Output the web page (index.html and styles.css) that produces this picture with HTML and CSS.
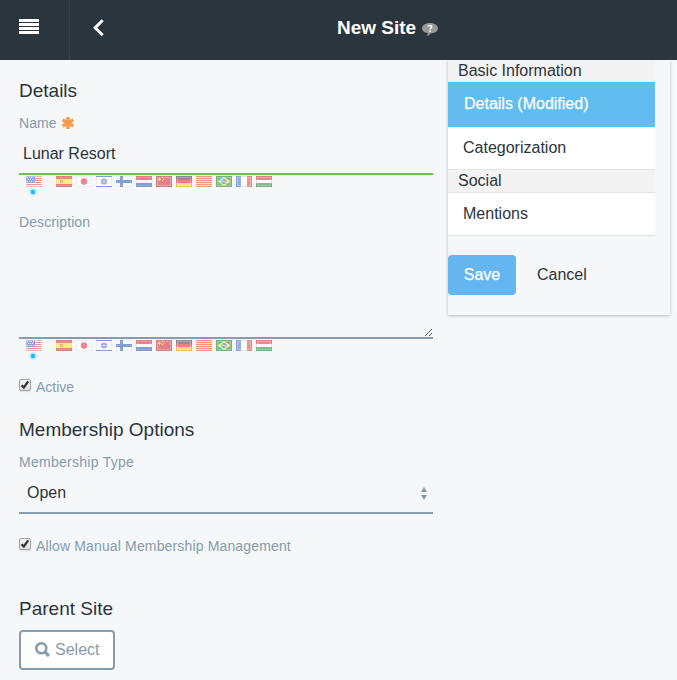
FILE: index.html
```html
<!DOCTYPE html>
<html lang="en">
<head>
<meta charset="utf-8">
<title>New Site</title>
<link rel="stylesheet" href="styles.css">
</head>
<body>
<svg class="defs" width="0" height="0">
  <defs>
    <g id="shade"><rect x=".5" y=".5" width="15" height="10" fill="none" stroke="#000" stroke-opacity=".16"/><rect x="1.5" y="1.5" width="13" height="8" fill="none" stroke="#fff" stroke-opacity=".25"/></g>
    <g id="strip">
      <g><path fill="#fff" d="M0 0h16v11H0z"/><path stroke="#e8331c" d="M0 .5h16M0 2.5h16M0 4.5h16M0 6.5h16M0 8.5h16M0 10.5h16"/><path fill="#2450c8" d="M0 0h9v7H0z"/><path stroke="#fff" stroke-dasharray="1 1" d="M1 1.5h7M2 3.5h6M1 5.5h7"/><path fill="none" stroke="#fff" stroke-opacity=".35" d="M.5 .5h15v10H.5z"/></g>
      <g transform="translate(30)"><path fill="#e00814" d="M0 0h16v11H0z"/><path fill="#ffe800" d="M0 3h16v5H0z"/><path fill="#d86030" d="M4 4h3v3H4z"/><path fill="#ffc0b0" d="M5 5h1v1H5z"/><use href="#shade" opacity=".5"/></g>
      <g transform="translate(50)"><path fill="#fff" d="M0 0h16v11H0z"/><circle cx="8" cy="5.5" r="3.2" fill="#f01020"/><use href="#shade" opacity=".6"/></g>
      <g transform="translate(70)"><path fill="#fff" d="M0 0h16v11H0z"/><path stroke="#2848c8" d="M0 .5h16M0 10.5h16"/><path fill="none" stroke="#3048d8" stroke-width="1.100" d="M8 2.800l2.500 4.200h-5zM8 8.200l2.500-4.200h-5z"/><use href="#shade" opacity=".6"/></g>
      <g transform="translate(90)"><path fill="#fff" d="M0 0h16v11H0z"/><path fill="#104cac" d="M0 4h16v3H0zM4 0h3v11H4z"/><use href="#shade" opacity=".6"/></g>
      <g transform="translate(110)"><path fill="#fff" d="M0 0h16v11H0z"/><path fill="#df1020" d="M0 0h16v4H0z"/><path fill="#1748a0" d="M0 7h16v4H0z"/><use href="#shade" opacity=".6"/></g>
      <g transform="translate(130)"><path fill="#d40c18" d="M0 0h16v11H0z"/><path fill="#ffc800" d="M3 2h1v1h1v1H4v1H3V4H2V3h1zM6 1h1v1H6zM7 3h1v1H7zM6 4h1v1H6z"/><use href="#shade"/></g>
      <g transform="translate(150)"><path fill="#302424" d="M0 0h16v4H0z"/><path fill="#e80818" d="M0 4h16v3H0z"/><path fill="#f4c000" d="M0 7h16v4H0z"/><use href="#shade"/></g>
      <g transform="translate(170)"><path fill="#ffe000" d="M0 0h16v11H0z"/><path stroke="#ec2414" d="M0 .5h16M0 2.500h16M0 4.500h16M0 6.500h16M0 8.500h16M0 10.500h16" stroke-width=".9"/></g>
      <g transform="translate(190)"><path fill="#087c20" d="M0 0h16v11H0z"/><path fill="#fff000" d="M8 1l6.500 4.500L8 10 1.500 5.500z"/><circle cx="8" cy="5.500" r="2.600" fill="#2060d8"/><path stroke="#fff" stroke-width=".8" d="M5.800 5l4.400 1.400"/><use href="#shade"/></g>
      <g transform="translate(210)"><path fill="#fff" d="M0 0h16v11H0z"/><path fill="#3468c8" d="M0 0h5v11H0z"/><path fill="#f03028" d="M11 0h5v11h-5z"/><use href="#shade"/></g>
      <g transform="translate(230)"><path fill="#fff" d="M0 0h16v11H0z"/><path fill="#d81c28" d="M0 0h16v4H0z"/><path fill="#107c28" d="M0 7h16v4H0z"/><use href="#shade"/></g>
    </g>
  </defs>
</svg>
<header class="topbar">
  <div class="menu"><svg width="20" height="15" fill="#fff"><path d="M0 0h20v3H0zM0 4h20v3H0zM0 8h20v3H0zM0 12h20v3H0z"/></svg></div>
  <div class="back"><svg width="13" height="18" fill="none" stroke="#fff" stroke-width="3"><path d="M10.700 1.200L3.200 8.700l7.500 7.500"/></svg></div>
  <h1>New Site</h1>
  <svg class="help" width="16" height="13" viewBox="0 0 16 13"><path fill="#999" d="M8 0c4.400 0 8 2.300 8 5.200s-3.400 5.100-7.600 5.200C7.500 11.800 6.200 12.600 4.700 12.900c.7-.9 1-1.800 1-2.800C2.400 9.500 0 7.600 0 5.200 0 2.300 3.600 0 8 0z"/><path fill="none" stroke="#fff" stroke-width="1.500" d="M6.100 3.700c.2-1.700 3.700-1.700 3.700.1 0 1.200-1.700 1.200-1.700 2.700M8.100 7.500v1.400"/></svg>
</header>
<main class="page">
  <form class="form">
    <h2>Details</h2>
    <label class="label name">Name <svg class="required" width="12" height="12" viewBox="0 0 12 12"><path stroke="#fa9a4c" stroke-width="3.400" d="M6 0v12M.6 2.900l10.800 6.200M.6 9.100l10.800-6.200"/></svg></label>
    <div class="input valid">Lunar Resort</div>
    <div class="locales"><svg width="246" height="11"><use href="#strip"/></svg><i class="dot"></i></div>
    <label class="label">Description</label>
    <div class="textarea"><svg width="8" height="8" shape-rendering="crispEdges" fill="#555"><path d="M0 6h1v1H0zM1 5h1v1H1zM2 4h1v1H2zM3 3h1v1H3zM4 2h1v1H4zM5 1h1v1H5zM6 0h1v1H6zM4 6h1v1H4zM5 5h1v1H5zM6 4h1v1H6z"/></svg></div>
    <div class="locales"><svg width="246" height="11"><use href="#strip"/></svg><i class="dot"></i></div>
    <div class="check active"><svg class="box" width="12" height="12" viewBox="0 0 10 10"><path d="M1.500 5.200l2.300 2.300 4.400-6.200"/></svg>Active</div>
    <h2>Membership Options</h2>
    <label class="label type">Membership Type</label>
    <div class="input select">Open<svg width="6" height="13" fill="#869cad"><path d="M3 0l3 5H0zM0 8h6l-3 5z"/></svg></div>
    <div class="check manual"><svg class="box" width="12" height="12" viewBox="0 0 10 10"><path d="M1.500 5.200l2.300 2.300 4.400-6.200"/></svg>Allow Manual Membership Management</div>
    <h2>Parent Site</h2>
    <div class="choose"><svg width="15" height="15" fill="none" stroke="#869cad"><circle cx="6.300" cy="6.300" r="5" stroke-width="2.600"/><path stroke-width="3.200" d="M9.600 9.600l4.400 4.400"/></svg>Select</div>
  </form>
  <aside class="panel">
    <nav>
      <div class="group first">Basic Information</div>
      <div class="item selected">Details (Modified)</div>
      <div class="item">Categorization</div>
      <div class="group">Social</div>
      <div class="item">Mentions</div>
    </nav>
    <div class="actions"><span class="save">Save</span><span class="cancel">Cancel</span></div>
  </aside>
</main>
</body>
</html>
```
FILE: styles.css
```css
* { box-sizing: border-box; }
body { margin: 0; height: 680px; overflow: hidden; background: #f5f7f9; color: #2b353d; font: 16px/20px "Liberation Sans", Arial, sans-serif; }
svg { display: block; flex: none; }
.defs { position: absolute; }
.topbar { display: flex; height: 60px; background: #2b353e; color: #fff; }
.menu { width: 70px; padding: 19px 0 0 19px; border-right: 1px solid #37424c; }
.back { width: 267px; padding: 19px 0 0 22px; }
h1 { margin: 17px 6px 0 0; font-size: 19px; line-height: 22px; white-space: nowrap; }
.help { margin-top: 23px; }
.page { display: flex; align-items: flex-start; padding-left: 19px; gap: 15px; }
.form { display: flex; flex-direction: column; width: 414px; padding-top: 19px; }
h2 { margin: 0 0 10px; font-size: 19px; font-weight: 400; line-height: 24px; }
.label { display: flex; gap: 5px; height: 20px; color: #869cad; font-size: 14px; letter-spacing: .1px; }
.type { letter-spacing: .27px; }
.required { margin-top: 4px; }
.input { height: 42px; padding: 11px 4px 0; border-bottom: 2px solid #869cad; }
.valid { border-color: #76bd4a; }
.locales { height: 37px; padding: 1px 0 0 7px; }
.locales svg { opacity: .5; }
.dot { display: block; width: 4px; height: 4px; margin: 3px 0 0 5px; border-radius: 2px; background: #1cb8f0; box-shadow: 0 0 2px 1px #75d8fa; }
.textarea { display: flex; justify-content: flex-end; align-items: flex-end; height: 107px; border-bottom: 2px solid #869cad; }
.check { display: flex; gap: 5px; height: 20px; color: #869cad; font-size: 14px; }
.active { margin: 1px 0 21px; }
.box { margin-top: 2px; border: 1px solid #a5a5a5; border-radius: 2px; background: linear-gradient(#f4f4f4, #dedede); box-shadow: 0 1px 1px #ddd; fill: none; stroke: #333; stroke-width: 2.2; }
.select { display: flex; justify-content: space-between; padding: 11px 6px 0 8px; }
.select svg { margin-top: 4px; }
.manual { margin: 22px 0 41px; letter-spacing: .15px; }
.choose { display: flex; gap: 5px; width: 96px; height: 40px; margin-top: -1px; padding: 8px 0 0 14px; border: 2px solid #869cad; border-radius: 4px; background: #fff; color: #869cad; }
.choose svg { margin-top: 2px; }
.panel { width: 222px; height: 255px; box-shadow: 0 1px 3px #bbb; clip-path: inset(0 -4px -5px -4px); }
nav { width: 207px; }
.group { height: 23px; padding: 1px 10px 0; border-bottom: 1px solid #dfe4e8; background: #f3f3f3; }
.first { height: 22px; border: 0; }
.item { height: 43px; padding: 11px 15px 0; border-bottom: 1px solid #dfe4e8; background: #fff; }
.selected { height: 45px; padding: 12px 16px 0; border: 0; background: #61bdef; color: #fff; -webkit-text-stroke: .25px #fff; }
.actions { display: flex; margin-top: 19px; line-height: 40px; }
.save { width: 68px; height: 40px; border-radius: 4px; background: #65b6f0; color: #fff; text-align: center; -webkit-text-stroke: .25px #fff; }
.cancel { margin-left: 21px; }
```
